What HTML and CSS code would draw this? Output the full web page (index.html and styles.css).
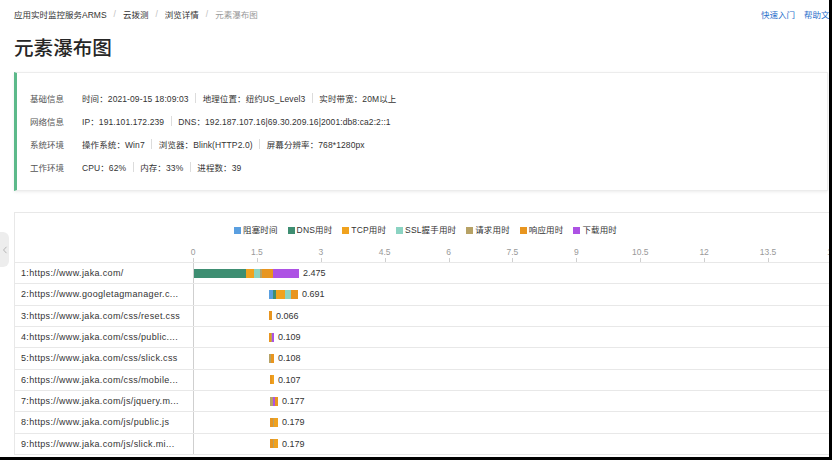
FILE: index.html
```html
<!DOCTYPE html>
<html lang="zh-CN">
<head>
<meta charset="utf-8">
<title>元素瀑布图</title>
<link rel="stylesheet" href="styles.css">
</head>
<body>
<div class="page">
  <header class="topbar">
    <nav class="crumbs">
      <span class="crumb">应用实时监控服务ARMS</span><span class="sep">/</span>
      <span class="crumb">云拨测</span><span class="sep">/</span>
      <span class="crumb">浏览详情</span><span class="sep">/</span>
      <span class="crumb current">元素瀑布图</span>
    </nav>
    <div class="links"><a>快速入门</a><a>帮助文档</a></div>
  </header>

  <h1 class="title">元素瀑布图</h1>

  <section class="info">
    <div class="info-row"><span class="info-label">基础信息</span><span class="item">时间：2021-09-15 18:09:03</span><i class="isep"></i><span class="item">地理位置：纽约US_Level3</span><i class="isep"></i><span class="item">实时带宽：20M以上</span></div>
    <div class="info-row"><span class="info-label">网络信息</span><span class="item">IP：191.101.172.239</span><i class="isep"></i><span class="item">DNS：192.187.107.16|69.30.209.16|2001:db8:ca2:2::1</span></div>
    <div class="info-row"><span class="info-label">系统环境</span><span class="item">操作系统：Win7</span><i class="isep"></i><span class="item">浏览器：Blink(HTTP2.0)</span><i class="isep"></i><span class="item">屏幕分辨率：768*1280px</span></div>
    <div class="info-row"><span class="info-label">工作环境</span><span class="item">CPU：62%</span><i class="isep"></i><span class="item">内存：33%</span><i class="isep"></i><span class="item">进程数：39</span></div>
  </section>

  <section class="chart">
    <div class="legend">
      <span class="lg"><i class="sw blocking"></i>阻塞时间</span>
      <span class="lg"><i class="sw dns"></i>DNS用时</span>
      <span class="lg"><i class="sw tcp"></i>TCP用时</span>
      <span class="lg"><i class="sw ssl"></i>SSL握手用时</span>
      <span class="lg"><i class="sw req"></i>请求用时</span>
      <span class="lg"><i class="sw resp"></i>响应用时</span>
      <span class="lg"><i class="sw dl"></i>下载用时</span>
    </div>

    <div class="axis-row">
      <div class="axis-spacer"></div>
      <div class="axis">
        <div class="tick"><span>0</span><i></i></div>
        <div class="tick"><span>1.5</span><i></i></div>
        <div class="tick"><span>3</span><i></i></div>
        <div class="tick"><span>4.5</span><i></i></div>
        <div class="tick"><span>6</span><i></i></div>
        <div class="tick"><span>7.5</span><i></i></div>
        <div class="tick"><span>9</span><i></i></div>
        <div class="tick"><span>10.5</span><i></i></div>
        <div class="tick"><span>12</span><i></i></div>
        <div class="tick"><span>13.5</span><i></i></div>
        <div class="tick"><span>15</span><i></i></div>
      </div>
    </div>

    <div class="rows">
      <div class="row"><div class="name">1:https://www.jaka.com/</div><div class="track"><div class="wbar" style="margin-left:0px"><i class="seg dns" style="width:52px"></i><i class="seg tcp" style="width:8px"></i><i class="seg ssl" style="width:6px"></i><i class="seg req" style="width:2px"></i><i class="seg resp" style="width:11px"></i><i class="seg dl" style="width:26px"></i></div><span class="val">2.475</span></div></div>
      <div class="row"><div class="name">2:https://www.googletagmanager.c...</div><div class="track"><div class="wbar" style="margin-left:75px"><i class="seg blocking" style="width:4px"></i><i class="seg dns" style="width:3px"></i><i class="seg tcp" style="width:9px"></i><i class="seg ssl" style="width:6px"></i><i class="seg resp" style="width:7px"></i></div><span class="val">0.691</span></div></div>
      <div class="row"><div class="name">3:https://www.jaka.com/css/reset.css</div><div class="track"><div class="wbar" style="margin-left:75px"><i class="seg resp" style="width:3px"></i></div><span class="val">0.066</span></div></div>
      <div class="row"><div class="name">4:https://www.jaka.com/css/public....</div><div class="track"><div class="wbar" style="margin-left:75px"><i class="seg resp" style="width:2px"></i><i class="seg req" style="width:1px"></i><i class="seg dl" style="width:2px"></i></div><span class="val">0.109</span></div></div>
      <div class="row"><div class="name">5:https://www.jaka.com/css/slick.css</div><div class="track"><div class="wbar" style="margin-left:75px"><i class="seg req" style="width:2px"></i><i class="seg resp" style="width:3px"></i></div><span class="val">0.108</span></div></div>
      <div class="row"><div class="name">6:https://www.jaka.com/css/mobile...</div><div class="track"><div class="wbar" style="margin-left:76px"><i class="seg resp" style="width:2px"></i><i class="seg tcp" style="width:2px"></i></div><span class="val">0.107</span></div></div>
      <div class="row"><div class="name">7:https://www.jaka.com/js/jquery.m...</div><div class="track"><div class="wbar" style="margin-left:76px"><i class="seg req" style="width:3px"></i><i class="seg dl" style="width:2px"></i><i class="seg resp" style="width:3px"></i></div><span class="val">0.177</span></div></div>
      <div class="row"><div class="name">8:https://www.jaka.com/js/public.js</div><div class="track"><div class="wbar" style="margin-left:76px"><i class="seg resp" style="width:3px"></i><i class="seg req" style="width:1px"></i><i class="seg tcp" style="width:4px"></i></div><span class="val">0.179</span></div></div>
      <div class="row"><div class="name">9:https://www.jaka.com/js/slick.mi...</div><div class="track"><div class="wbar" style="margin-left:76px"><i class="seg resp" style="width:3px"></i><i class="seg req" style="width:1px"></i><i class="seg tcp" style="width:4px"></i></div><span class="val">0.179</span></div></div>
    </div>
  </section>
</div>

<button class="side-tab" aria-label="收起">
  <svg width="6" height="8" viewBox="0 0 6 8"><path d="M4.5 0.8 L1.5 4 L4.5 7.2" fill="none" stroke="#b5b5b5" stroke-width="1"/></svg>
</button>
<div class="edge-right"></div>
<div class="edge-bottom"></div>
</body>
</html>
```

FILE: styles.css
```css
* { box-sizing: border-box; }

html, body {
  margin: 0;
  padding: 0;
}

body {
  width: 832px;
  height: 460px;
  overflow: hidden;
  background: #fff;
  font-family: "Liberation Sans", "Noto Sans CJK SC", sans-serif;
  font-size: 8.5px;
  color: #333;
}

.page {
  padding-left: 14px;
  width: 832px;
}

/* top bar */
.topbar {
  display: flex;
  justify-content: space-between;
  align-items: center;
  height: 28px;
  width: 824px;
}

.crumbs {
  display: flex;
  align-items: center;
  color: #333;
}

.crumb.current { color: #999; }

.sep {
  color: #c0c0c0;
  margin: 0 7px;
}

.links {
  display: flex;
  gap: 9px;
}

.links a {
  color: #2a6fcb;
  white-space: nowrap;
}

.title {
  margin: 5px 0 0;
  height: 28px;
  line-height: 28px;
  font-size: 19.6px;
  font-weight: 500;
  color: #262626;
  font-family: "Noto Sans CJK SC", sans-serif;
}

/* info card */
.info {
  margin-top: 11px;
  width: 814px;
  border: 1px solid #ececec;
  border-left: 3px solid #5cb98a;
  box-shadow: 0 1px 3px rgba(0,0,0,0.08);
  padding: 13px 0 12px 13px;
}

.info-row {
  display: flex;
  align-items: center;
  height: 23px;
}

.info-label {
  width: 52px;
  color: #555;
  flex: none;
}

.item {
  color: #333;
  white-space: nowrap;
  letter-spacing: 0.1px;
}

.isep {
  width: 1px;
  height: 10px;
  background: #dcdcdc;
  margin: 0 6.5px;
}

/* chart card */
.chart {
  margin-top: 21px;
  width: 840px;
  border-top: 1px solid #e8e8e8;
  border-left: 1px solid #e8e8e8;
}

.legend {
  display: flex;
  justify-content: flex-start;
  padding: 10px 0 0 219px;
  height: 24px;
  line-height: 14px;
  gap: 10px;
  color: #333;
}

.lg {
  display: flex;
  align-items: center;
  white-space: nowrap;
  letter-spacing: 0.15px;
}

.sw {
  width: 7px;
  height: 7px;
  margin-right: 2px;
  display: inline-block;
}

.blocking { background: #5a9fe0; }
.dns { background: #3e8e72; }
.tcp { background: #f0a21e; }
.ssl { background: #8bd3c2; }
.req { background: #b7a265; }
.resp { background: #e8951f; }
.dl { background: #ad52e4; }

.axis-row {
  display: flex;
  margin-top: 9px;
  height: 16px;
}

.axis-spacer {
  width: 178px;
  flex: none;
}

.axis {
  display: flex;
}

.tick {
  width: 63.9px;
  flex: none;
  display: flex;
  flex-direction: column;
}

.tick span {
  width: 40px;
  margin-left: -20px;
  text-align: center;
  color: #999;
  height: 12px;
  line-height: 12px;
}

.tick i {
  display: block;
  width: 1px;
  height: 4px;
  background: #cfcfcf;
}

.rows {
  border-top: 1px solid #e8e8e8;
}

.row {
  display: flex;
  height: 21.33px;
  border-bottom: 1px solid #e8e8e8;
}

.name {
  width: 178px;
  flex: none;
  padding-left: 6px;
  display: flex;
  align-items: center;
  white-space: nowrap;
  overflow: hidden;
  color: #333;
  font-size: 9px;
  letter-spacing: 0.35px;
}

.track {
  flex: 1;
  border-left: 1px solid #cfcfcf;
  display: flex;
  align-items: center;
}

.wbar {
  display: flex;
  height: 9px;
  flex: none;
}

.seg {
  display: block;
  height: 100%;
}

.val {
  margin-left: 4px;
  color: #333;
  font-size: 9px;
}

/* overlays */
.side-tab {
  position: fixed;
  left: 0;
  top: 232px;
  width: 9px;
  height: 35px;
  padding: 0;
  border: none;
  background: #ededed;
  border-radius: 0 6px 6px 0;
  display: flex;
  align-items: center;
  justify-content: center;
}

.edge-right {
  position: fixed;
  top: 0;
  right: 0;
  width: 3px;
  height: 460px;
  background: #000;
}

.edge-bottom {
  position: fixed;
  left: 0;
  bottom: 0;
  width: 832px;
  height: 3px;
  background: #000;
}
```
